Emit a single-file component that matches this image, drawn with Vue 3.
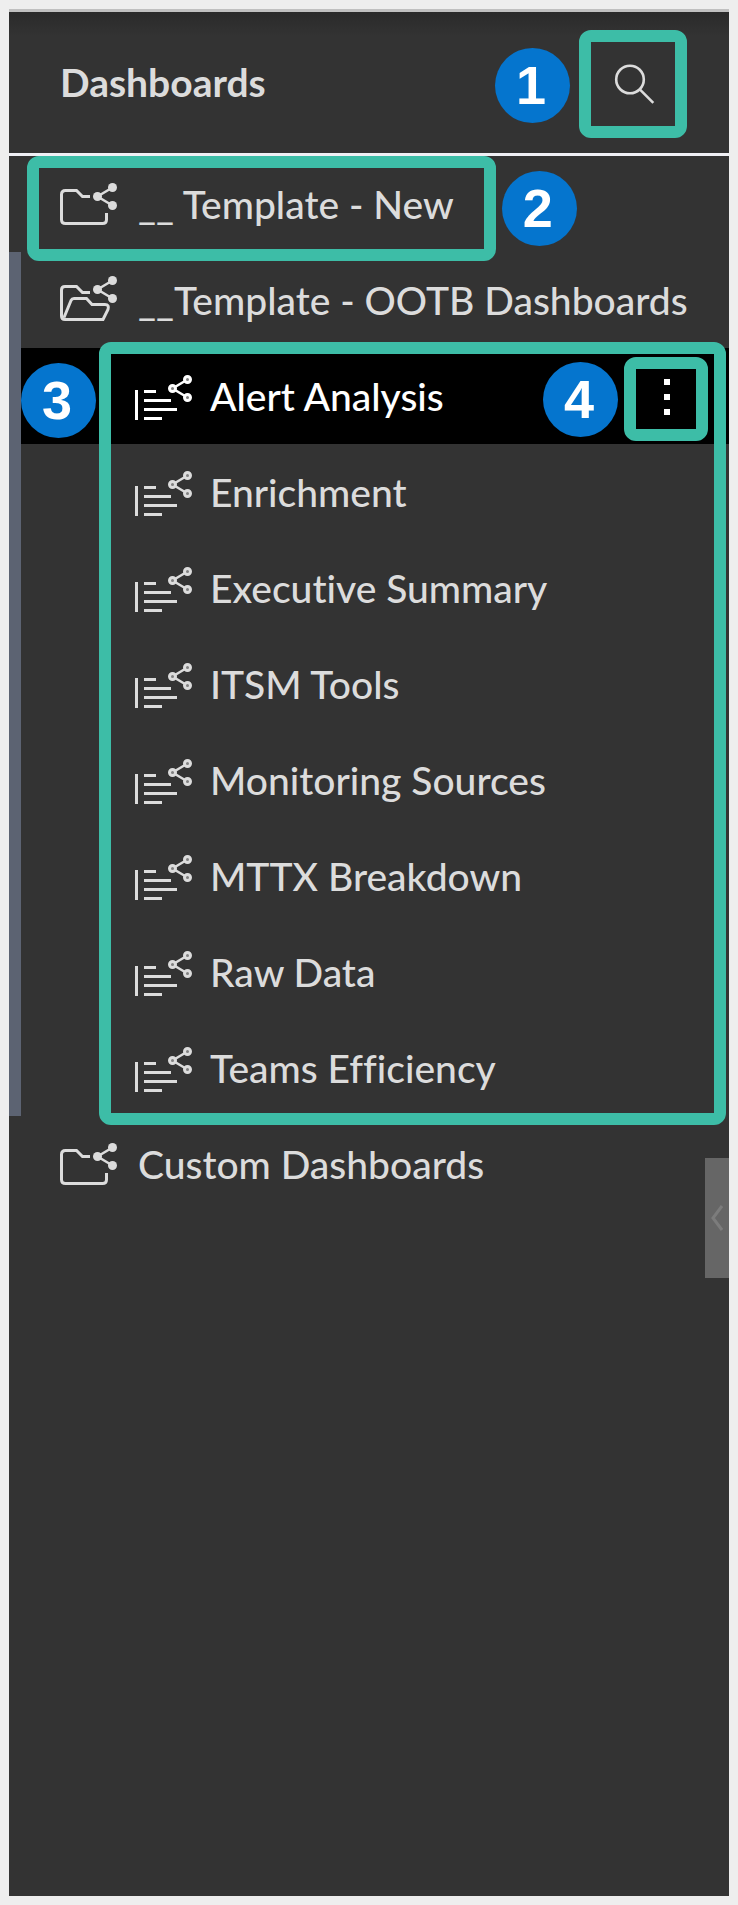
<template>
  <div class="page">
    <aside class="panel">
      <header class="panel-header">
        <h1>Dashboards</h1>
        <div class="search-wrap">
          <span class="badge badge-search">1</span>
          <button type="button" class="search-button highlight" aria-label="Search dashboards">
            <svg width="84" height="84" viewBox="0 0 84 84" fill="none">
              <circle cx="39" cy="37.5" r="13.8" />
              <path d="M48.8 47.3 62.3 60.8" />
            </svg>
          </button>
        </div>
      </header>

      <nav class="tree">
        <div class="row">
          <a href="#" class="folder-link marked" @click.prevent>
            <svg class="icon" width="57" height="48" viewBox="0 0 57 48">
              <path class="line" :d="closedFolder" />
              <path class="line thin" d="M52.5 7.5 37.5 16.5l15 9" />
              <circle cx="37.5" cy="16.5" r="4.5" />
              <circle cx="52.5" cy="7.5" r="4.5" />
              <circle cx="52.5" cy="25.5" r="4.5" />
            </svg>
            <span>__ Template - New</span>
            <span class="highlight folder-highlight"></span>
            <span class="badge badge-folder">2</span>
          </a>
        </div>

        <div class="open-group">
          <div class="row">
            <a href="#" class="folder-link" @click.prevent="open = !open">
              <svg class="icon" width="57" height="48" viewBox="0 0 57 48">
                <path class="line" d="M30 16.5h-7.5l-6-6H5Q1.5 10.5 1.5 14V40Q1.5 43.5 5 43.5H43L48 33.5Q49.5 28.5 45 28.5H32l-5.5-6H14Q12 22.5 11 24.5L4 41.5" />
                <path class="line thin" d="M52.5 4.5 37.5 13.5l15 9" />
                <circle cx="37.5" cy="13.5" r="4.5" />
                <circle cx="52.5" cy="4.5" r="4.5" />
                <circle cx="52.5" cy="22.5" r="4.5" />
              </svg>
              <span>__Template - OOTB Dashboards</span>
            </a>
          </div>

          <ul v-if="open" class="dashboards">
            <li
              v-for="name in dashboards"
              :key="name"
              class="row dashboard"
              :class="{ active: name === selected }"
            >
              <a href="#" class="dashboard-link" @click.prevent="selected = name">
                <svg class="icon" width="57" height="48" viewBox="0 0 57 48">
                  <path d="M0 18h3v30H0zM9 18h12v3H9zM9 27h27v3H9zM9 36h33v3H9zM9 45h18v3H9z" />
                  <path class="line thin" d="M52.5 7.5 37.5 16.5l15 9" />
                  <circle class="node" cx="37.5" cy="16.5" r="3" />
                  <circle class="node" cx="52.5" cy="7.5" r="3" />
                  <circle class="node" cx="52.5" cy="25.5" r="3" />
                </svg>
                <span>{{ name }}</span>
              </a>
              <div v-if="name === selected" class="menu-wrap">
                <span class="badge">4</span>
                <button type="button" class="menu-button highlight" aria-label="Dashboard options">
                  <svg width="60" height="60" viewBox="0 0 60 60">
                    <path d="M28 10h6v6h-6zM28 25h6v6h-6zM28 40h6v6h-6z" />
                  </svg>
                </button>
              </div>
            </li>
            <li class="highlight list-highlight" aria-hidden="true"></li>
            <li class="badge badge-list">3</li>
          </ul>
        </div>

        <div class="row">
          <a href="#" class="folder-link" @click.prevent>
            <svg class="icon" width="57" height="48" viewBox="0 0 57 48">
              <path class="line" :d="closedFolder" />
              <path class="line thin" d="M52.5 7.5 37.5 16.5l15 9" />
              <circle cx="37.5" cy="16.5" r="4.5" />
              <circle cx="52.5" cy="7.5" r="4.5" />
              <circle cx="52.5" cy="25.5" r="4.5" />
            </svg>
            <span>Custom Dashboards</span>
          </a>
        </div>
      </nav>

      <button type="button" class="collapse" aria-label="Collapse panel">
        <svg width="24" height="30" viewBox="0 0 24 30" fill="none">
          <path d="M17 3 8 15l9 12" />
        </svg>
      </button>
    </aside>
  </div>
</template>

<script setup>
import { ref } from 'vue'

const dashboards = [
  'Alert Analysis',
  'Enrichment',
  'Executive Summary',
  'ITSM Tools',
  'Monitoring Sources',
  'MTTX Breakdown',
  'Raw Data',
  'Teams Efficiency'
]

const selected = ref('Alert Analysis')
const open = ref(true)

const closedFolder = 'M30 16.5h-7.5l-6-6H5.5Q1.5 10.5 1.5 14.5v25q0 4 4 4h37q4 0 4-4V33'
</script>

<style>
body {
  background: #eeeeee;
}
</style>

<style scoped>
.page {
  display: flex;
  box-sizing: border-box;
  min-height: 100vh;
  padding: 9px;
  background: #eeeeee;
  font-family: Lato, sans-serif;
  font-size: 39px;
  font-weight: 500;
  font-variant-ligatures: none;
  color: #dcdcdc;
}

.panel {
  position: relative;
  flex: 1;
  min-width: 0;
  background: #333333;
  border-top: 3px solid #c0c0c0;
}

.panel-header {
  display: flex;
  justify-content: space-between;
  align-items: flex-start;
  padding: 18px 42px 15px 51px;
  border-bottom: 3px solid #f0f0f5;
  background: linear-gradient(#2a2a2a, #333333 24px);
}

h1 {
  margin: 0;
  font-size: 39px;
  font-weight: 700;
  line-height: 105px;
}

button {
  display: block;
  margin: 0;
  padding: 0;
  border: none;
  background: none;
  cursor: pointer;
}

svg {
  display: block;
}

.highlight {
  border: 12px solid #3dbda7;
  border-radius: 12px;
}

.badge {
  box-sizing: border-box;
  width: 75px;
  height: 75px;
  padding-right: 3px;
  border-radius: 50%;
  background: #0575ce;
  color: #ffffff;
  font-family: "Liberation Sans", Arial, sans-serif;
  font-size: 54px;
  font-weight: 700;
  line-height: 75px;
  text-align: center;
}

.search-wrap {
  position: relative;
}

.search-button svg {
  stroke: #dcdcdc;
  stroke-width: 2.6;
}

.badge-search {
  position: absolute;
  top: 18px;
  right: calc(100% + 9px);
}

.row {
  display: flex;
  align-items: center;
  height: 96px;
}

a {
  color: inherit;
  text-decoration: none;
  white-space: nowrap;
}

.folder-link {
  position: relative;
  display: flex;
  align-items: center;
  gap: 21px;
  height: 96px;
  padding: 0 42px 0 51px;
}

.open-group .folder-link {
  padding-left: 39px;
}

.icon {
  flex: none;
  overflow: visible;
  fill: currentColor;
}

.icon .line {
  fill: none;
  stroke: currentColor;
  stroke-width: 3;
}

.icon .thin {
  stroke-width: 2.5;
}

.icon .node {
  fill: #808080;
  stroke: currentColor;
  stroke-width: 3;
}

.folder-highlight {
  position: absolute;
  inset: 0 0 -9px 18px;
}

.badge-folder {
  position: absolute;
  top: 15px;
  left: calc(100% + 6px);
}

.open-group {
  border-left: 12px solid #5c6372;
}

.dashboards {
  position: relative;
  margin: 0;
  padding: 0;
  list-style: none;
}

.dashboard {
  justify-content: space-between;
  padding: 0 21px 0 114px;
}

.dashboard.active {
  background: #000000;
  color: #ffffff;
}

.dashboard-link {
  display: flex;
  align-items: center;
  gap: 18px;
}

.menu-wrap {
  display: flex;
  align-items: center;
  gap: 6px;
  margin-top: 6px;
}

.menu-button svg {
  fill: #ffffff;
}

.list-highlight {
  position: absolute;
  inset: -6px 3px -9px 78px;
  pointer-events: none;
}

.badge-list {
  position: absolute;
  top: 15px;
  left: 0;
}

.collapse {
  position: absolute;
  top: 1146px;
  right: 0;
  width: 24px;
  height: 120px;
  background: #666666;
}

.collapse svg {
  stroke: #7c7c7c;
  stroke-width: 3;
}
</style>
